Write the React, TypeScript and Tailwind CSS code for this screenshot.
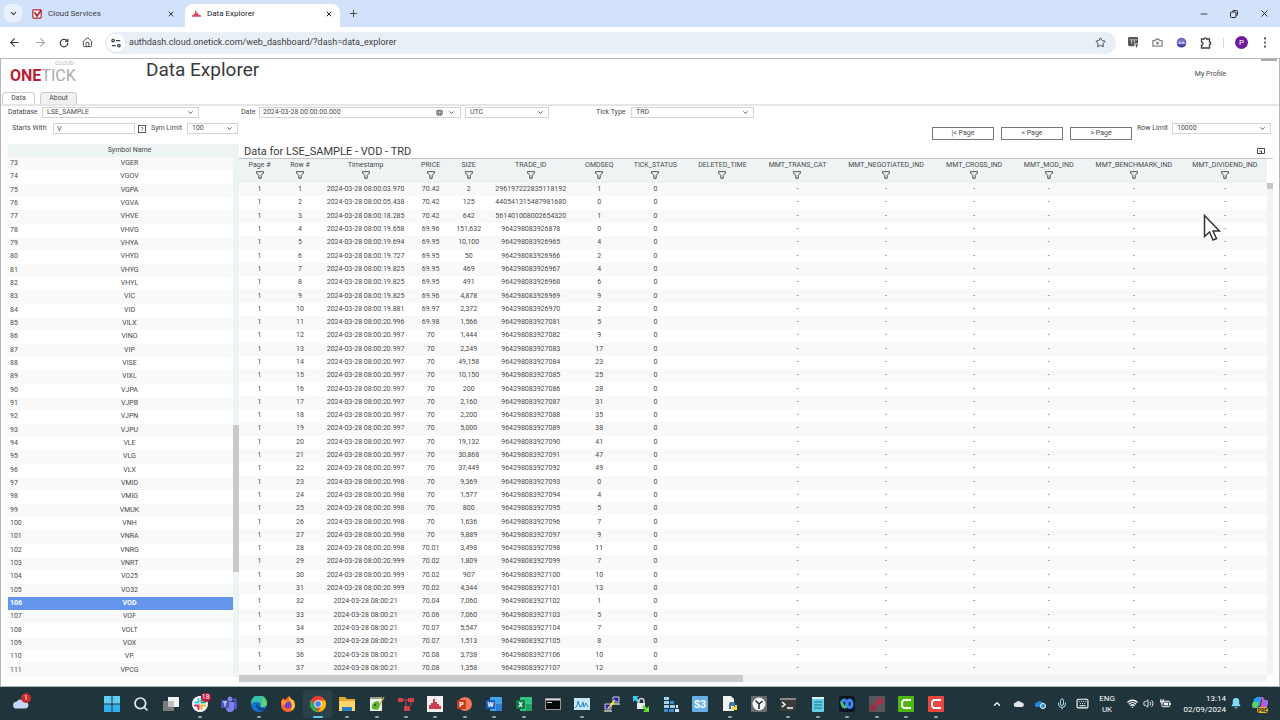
import type { ReactNode } from 'react';
import {
  ArrowLeft,
  ArrowRight,
  ChevronDown,
  ChevronUp,
  House,
  Keyboard,
  Mic,
  Minus,
  Plus,
  RotateCw,
  Search,
  Star,
  Volume2,
  Wifi,
  X,
} from 'lucide-react';

type Tick = [time: string, price: string, size: string, tradeId: string, omdseq: number];

const symbols = (
  'VGER VGOV VGPA VGVA VHVE VHVG VHYA VHYD VHYG VHYL VIC VID VILX VINO VIP VISE VIXL VJPA VJPB VJPN VJPU VLE VLG ' +
  'VLX VMID VMIG VMUK VNH VNRA VNRG VNRT VO25 VO32 VOD VOF VOLT VOX VP. VPCG'
).split(' ');
const firstSymbolRow = 73;

const ticks: Tick[] = [
  ['03.970', '70.42', '2', '296197222835118192', 1],
  ['05.438', '70.42', '125', '440541315487981680', 0],
  ['18.285', '70.42', '642', '561401008002654320', 1],
  ['19.658', '69.96', '151,632', '964298083926878', 0],
  ['19.694', '69.95', '10,100', '964298083926965', 4],
  ['19.727', '69.95', '50', '964298083926966', 2],
  ['19.825', '69.95', '469', '964298083926967', 4],
  ['19.825', '69.95', '491', '964298083926968', 6],
  ['19.825', '69.96', '4,878', '964298083926969', 9],
  ['19.881', '69.97', '2,372', '964298083926970', 2],
  ['20.996', '69.98', '1,566', '964298083927081', 5],
  ['20.997', '70', '1,444', '964298083927082', 9],
  ['20.997', '70', '2,249', '964298083927083', 17],
  ['20.997', '70', '49,158', '964298083927084', 23],
  ['20.997', '70', '10,150', '964298083927085', 25],
  ['20.997', '70', '200', '964298083927086', 28],
  ['20.997', '70', '2,160', '964298083927087', 31],
  ['20.997', '70', '2,200', '964298083927088', 35],
  ['20.997', '70', '5,000', '964298083927089', 38],
  ['20.997', '70', '19,132', '964298083927090', 41],
  ['20.997', '70', '30,868', '964298083927091', 47],
  ['20.997', '70', '37,449', '964298083927092', 49],
  ['20.998', '70', '9,369', '964298083927093', 0],
  ['20.998', '70', '1,577', '964298083927094', 4],
  ['20.998', '70', '800', '964298083927095', 5],
  ['20.998', '70', '1,636', '964298083927096', 7],
  ['20.998', '70', '9,889', '964298083927097', 9],
  ['20.998', '70.01', '3,498', '964298083927098', 11],
  ['20.999', '70.02', '1,809', '964298083927099', 7],
  ['20.999', '70.02', '907', '964298083927100', 10],
  ['20.999', '70.02', '4,344', '964298083927101', 13],
  ['21', '70.04', '7,060', '964298083927102', 1],
  ['21', '70.06', '7,060', '964298083927103', 5],
  ['21', '70.07', '5,547', '964298083927104', 7],
  ['21', '70.07', '1,513', '964298083927105', 8],
  ['21', '70.08', '3,738', '964298083927106', 10],
  ['21', '70.08', '1,358', '964298083927107', 12],
];

const columns = [
  { name: 'Page #', width: 'w-[41px]' },
  { name: 'Row #', width: 'w-[40px]' },
  { name: 'Timestamp', width: 'w-[91px]' },
  { name: 'PRICE', width: 'w-[39px]' },
  { name: 'SIZE', width: 'w-[37px]' },
  { name: 'TRADE_ID', width: 'w-[87px]' },
  { name: 'OMDSEQ', width: 'w-[50px]' },
  { name: 'TICK_STATUS', width: 'w-[62px]' },
  { name: 'DELETED_TIME', width: 'w-[72px]' },
  { name: 'MMT_TRANS_CAT', width: 'w-[78px]' },
  { name: 'MMT_NEGOTIATED_IND', width: 'w-[99px]' },
  { name: 'MMT_CROSS_IND', width: 'w-[77px]' },
  { name: 'MMT_MOD_IND', width: 'w-[72px]' },
  { name: 'MMT_BENCHMARK_IND', width: 'w-[98px]' },
  { name: 'MMT_DIVIDEND_IND', width: 'w-[84px]' },
];

type SelectProps = { id: string; value: string; className: string; label?: string };

function Select({ id, value, className, label }: SelectProps) {
  return (
    <div className={`relative h-[11px] ${className}`}>
      <select
        id={id}
        aria-label={label}
        className="block h-full w-full appearance-none border border-[#d4d4d4] bg-white pl-1 text-[7px] leading-[9px] text-[#4a4a4a]"
      >
        <option>{value}</option>
      </select>
      <ChevronDown className="pointer-events-none absolute top-[2px] right-[5px] size-[7px] text-[#444]" strokeWidth={3} />
    </div>
  );
}

function BrowserTabs() {
  return (
    <div className="flex h-[27px] shrink-0 items-end bg-[#d3e2fb] text-[8px] text-[#3c4043]">
      <button aria-label="Search tabs" className="mb-[5px] ml-1 flex size-[18px] items-center justify-center rounded-md bg-[#e9f1fe]">
        <ChevronDown className="size-[9px]" strokeWidth={3} />
      </button>
      <div className="flex h-[23px] w-[163px] items-center px-[10px] pb-[3px]">
        <svg viewBox="0 0 12 12" className="size-[10px]">
          <rect x="1" y="1" width="10" height="10" rx="1" fill="#fff" stroke="#b3202c" strokeWidth="1.4" />
          <path d="M3 4l3 4.500 5-7" fill="none" stroke="#b3202c" strokeWidth="2" />
        </svg>
        <span className="ml-[6px] flex-1">Cloud Services</span>
        <button aria-label="Close tab">
          <X className="size-2" strokeWidth={3} />
        </button>
      </div>
      <div className="flex h-[23px] w-[155px] items-center rounded-t-lg bg-white px-[7px] pb-[3px] text-[#202124]">
        <svg viewBox="0 0 12 12" className="size-[9px]" fill="#d64b5b">
          <path d="M0 9V7h2V5h2V1h2v3h2v2h2v1h2v2z" />
        </svg>
        <span className="ml-[6px] flex-1">Data Explorer</span>
        <button aria-label="Close tab">
          <X className="size-2" strokeWidth={3} />
        </button>
      </div>
      <button aria-label="New tab" className="mb-2 ml-2">
        <Plus className="size-[11px]" strokeWidth={2} />
      </button>
      <div className="mr-[10px] mb-2 ml-auto flex items-center gap-5 text-[#202124]">
        <button aria-label="Minimise">
          <Minus className="size-[10px]" />
        </button>
        <button aria-label="Restore">
          <svg viewBox="0 0 10 10" className="size-[10px]" fill="none" stroke="currentColor">
            <rect x="1.500" y="3" width="5.500" height="5.500" rx="1" />
            <path d="M3.500 3V2.500a1 1 0 0 1 1-1h3a1 1 0 0 1 1 1v3a1 1 0 0 1-1 1H7" />
          </svg>
        </button>
        <button aria-label="Close">
          <X className="size-[11px]" />
        </button>
      </div>
    </div>
  );
}

function AddressBar() {
  return (
    <div className="flex h-[31px] shrink-0 items-center bg-white text-[#3c4043]">
      <div className="ml-2 flex w-[85px] items-center justify-between">
        <button aria-label="Back">
          <ArrowLeft className="size-[13px]" strokeWidth={2} />
        </button>
        <button aria-label="Forward" className="text-[#a5a8ab]">
          <ArrowRight className="size-[13px]" strokeWidth={2} />
        </button>
        <button aria-label="Reload">
          <RotateCw className="size-[10px]" strokeWidth={3} />
        </button>
        <button aria-label="Home">
          <House className="size-[11px]" strokeWidth={2} />
        </button>
      </div>
      <div className="ml-3 flex h-[22px] flex-1 items-center rounded-full bg-[#e9eff6] pr-[10px] pl-[2px]">
        <span className="flex size-[18px] items-center justify-center rounded-full bg-white">
          <svg viewBox="0 0 12 12" className="size-[10px]" fill="none" stroke="currentColor" strokeWidth="1.500">
            <circle cx="2.500" cy="3" r="1.500" />
            <path d="M6 3h5M1 9h5" />
            <circle cx="9.500" cy="9" r="1.500" />
          </svg>
        </span>
        <input
          aria-label="Address"
          readOnly
          value="authdash.cloud.onetick.com/web_dashboard/?dash=data_explorer"
          className="ml-[4px] flex-1 bg-transparent text-[9px] text-[#3c4043] outline-none"
        />
        <Star className="size-[11px]" strokeWidth={2} />
      </div>
      <div className="mr-[13px] ml-3 flex items-center">
        <svg viewBox="0 0 12 12" className="size-[11px]">
          <rect width="11" height="10" rx="1.500" fill="#55595c" />
          <path d="M2 3h2v4M5 3h2v3M8 3h2" stroke="#d5d5d5" fill="none" />
          <path d="M7 7h5v5H7z" fill="#fff" />
          <path d="M8 8h3L9 12z" fill="#444" />
        </svg>
        <svg viewBox="0 0 12 12" className="ml-[13px] size-[11px]" fill="none" stroke="#8a8d90" strokeWidth="1.500">
          <path d="M1 4h2.500l1-1.500h3l1 1.500H11v6H1z" />
          <path d="M6 5v3.500M4.200 6.800h3.600" />
        </svg>
        <svg viewBox="0 0 12 12" className="ml-[13px] size-[11px]">
          <circle cx="6" cy="6" r="5.300" fill="#7471c4" />
          <path d="M2 8l2.500-4L6 6.500 8 4l2 4" fill="#b9b8ee" />
          <path d="M1 8h10a5.300 5.300 0 0 1-10 0z" fill="#4542a0" />
        </svg>
        <svg viewBox="0 0 12 12" className="ml-[13px] size-[12px]" fill="none" stroke="#3c4043" strokeWidth="1.300">
          <path d="M1.500 2h2.700a1.200 1.200 0 0 1 2.400 0h2.900v3a1.300 1.300 0 0 1 0 2.600V11h-8V8.200a1.500 1.500 0 0 0 0-3z" />
        </svg>
        <span className="ml-[11px] h-[10px] w-px bg-[#c9dcf5]" />
        <span className="ml-[11px] flex size-[13px] items-center justify-center rounded-full bg-[#6d1b9a] text-[8px] text-white">P</span>
        <svg viewBox="0 0 4 12" className="ml-[15px] h-[11px] w-[4px]" fill="#3c4043">
          <circle cx="2" cy="1.500" r="1.100" />
          <circle cx="2" cy="6" r="1.100" />
          <circle cx="2" cy="10.500" r="1.100" />
        </svg>
      </div>
    </div>
  );
}

function Header() {
  return (
    <header className="flex h-[33px] shrink-0">
      <div className="ml-[9px] w-[136px] pt-px">
        <span className="block w-[64px] text-right text-[6px] leading-[6px] text-[#b5b5b5]">CLOUD</span>
        <span className="block text-[16px] leading-[20px] text-[#a9a9ab]">
          <b className="text-[#b81f38]">ONE</b>TICK
        </span>
      </div>
      <h1 className="text-[19px] leading-[22px] text-[#3a3a3a]">Data Explorer</h1>
      <div className="mr-[2px] ml-auto">
        <div className="ml-auto h-[2px] w-[16px] bg-[#aaa]" />
        <a href="#profile" className="mt-[8px] mr-[51px] block leading-[11px]">
          My Profile
        </a>
      </div>
    </header>
  );
}

function Filters() {
  return (
    <form className="shrink-0 leading-[11px]">
      <div className="flex h-[12px] items-center">
        <label htmlFor="database" className="ml-[7px] w-[34px]">Database</label>
        <Select id="database" value="LSE_SAMPLE" className="w-[157px]" />
        <label htmlFor="date" className="ml-[42px] w-[18px]">Date</label>
        <div className="flex h-[11px] w-[202px] items-center border border-[#d4d4d4] pr-[5px] pl-[3px]">
          <input id="date" defaultValue="2024-03-28 00:00:00.000" className="min-w-0 flex-1 text-[7px] leading-[9px] outline-none" />
          <svg viewBox="0 0 8 8" className="size-[7px]" fill="none" stroke="#444">
            <rect x="1" y="1.500" width="6" height="5.500" rx="1" />
            <path d="M1 3h6M1 5h6M3 3v4M5 3v4" strokeWidth=".6" />
          </svg>
          <ChevronDown className="ml-[5px] size-[7px]" strokeWidth={3} />
        </div>
        <Select id="zone" label="Time zone" value="UTC" className="ml-1 w-[84px]" />
        <label htmlFor="tick-type" className="ml-[47px] w-[35px]">Tick Type</label>
        <Select id="tick-type" value="TRD" className="w-[123px]" />
      </div>
      <div className="flex h-[26px] items-start pt-[5px]">
        <label htmlFor="starts-with" className="ml-[11px] w-[41px]">Starts With</label>
        <input
          id="starts-with"
          defaultValue="V"
          className="h-[11px] w-[82px] border border-[#d4d4d4] pl-[3px] text-[7px] leading-[9px] outline-none"
        />
        <button type="button" aria-label="Help" className="mt-[2px] ml-[3px] flex size-[8px] items-center justify-center border border-[#555] text-[6px] leading-[6px]">
          ?
        </button>
        <label htmlFor="sym-limit" className="ml-[5px] w-[36px]">Sym Limit</label>
        <Select id="sym-limit" value="100" className="w-[51px]" />
        <div className="mt-[4px] ml-auto flex gap-[7px]">
          {['|< Page', '< Page', '> Page'].map((text) => (
            <button key={text} type="button" className="h-[13px] w-[62px] border border-[#777] leading-[11px]">
              {text}
            </button>
          ))}
        </div>
        <label htmlFor="row-limit" className="ml-[5px] w-[35px]">Row Limit</label>
        <Select id="row-limit" value="10000" className="mr-[8px] w-[99px]" />
      </div>
    </form>
  );
}

function SymbolList() {
  return (
    <section className="mb-[5px] ml-[7px] flex w-[231px] shrink-0">
      <table className="h-full w-[225px] table-fixed border-collapse text-center">
        <thead>
          <tr className="h-[13px] bg-[#eef3f4]">
            <th className="w-[18px] p-0" />
            <th className="p-0 font-normal">Symbol Name</th>
            <th className="w-0 p-0" />
          </tr>
        </thead>
        <tbody>
          {symbols.map((symbol, i) => (
            <tr key={symbol} className={symbol === 'VOD' ? 'bg-[#6495ed] font-bold text-white' : 'odd:bg-[#f9f9f9]'}>
              <td className="p-0 pl-[2px] text-left">{firstSymbolRow + i}</td>
              <td className="p-0">{symbol}</td>
              <td className="p-0" />
            </tr>
          ))}
        </tbody>
      </table>
      <div className="flex w-[6px] flex-col bg-[#eef3f4] pt-[281px]">
        <div className="h-[147px] bg-[#c6cacc]" />
      </div>
    </section>
  );
}

function FunnelIcon() {
  return (
    <svg viewBox="0 0 12 12" className="mx-auto size-[8px]" fill="none" stroke="#444" strokeWidth="1.400">
      <path d="M.8 1h10.400v2L7.800 6.500V11H4.200V6.500L.8 3z" />
    </svg>
  );
}

function TickData() {
  return (
    <section className="relative flex min-w-0 flex-1 flex-col">
      <div className="mr-[6px] flex h-[15px] items-center justify-between border-b border-[#c4c8c9] pl-[5px]">
        <h2 className="text-[11px] leading-[13px] text-[#3a3a3a]">Data for LSE_SAMPLE - VOD - TRD</h2>
        <button aria-label="Export" className="mr-[8px]">
          <svg viewBox="0 0 8 6" className="h-[6px] w-[8px]" fill="none" stroke="#333">
            <path d="M.5.5h7v5h-7zM2.500 3h2v2" strokeWidth=".9" />
          </svg>
        </button>
      </div>
      <div className="mr-[6px] flex min-h-0 flex-1">
        <table className="h-full min-w-0 flex-1 table-fixed border-collapse text-center">
          <thead>
            <tr className="h-[24px] bg-[#eef3f4]">
              {columns.map((column) => (
                <th key={column.name} className={`p-0 align-top leading-[12px] font-normal whitespace-nowrap ${column.width}`}>
                  {column.name}
                  <FunnelIcon />
                </th>
              ))}
            </tr>
          </thead>
          <tbody>
            {ticks.map(([time, price, size, tradeId, omdseq], i) => (
              <tr key={tradeId} className="odd:bg-[#f9f9f9]">
                <td className="p-0">1</td>
                <td className="p-0">{i + 1}</td>
                <td className="p-0">2024-03-28 08:00:{time}</td>
                <td className="p-0">{price}</td>
                <td className="p-0">{size}</td>
                <td className="p-0">{tradeId}</td>
                <td className="p-0">{omdseq}</td>
                <td className="p-0">0</td>
                <td className="p-0" />
                {columns.slice(9).map((column) => (
                  <td key={column.name} className="p-0">-</td>
                ))}
              </tr>
            ))}
          </tbody>
        </table>
        <div className="mt-[24px] w-[6px] bg-[#f2f3f4]">
          <div className="h-[6px] bg-[#c6c6c6]" />
        </div>
      </div>
      <div className="mr-[12px] h-[7px] bg-[#f2f3f4]">
        <div className="h-full w-[49%] bg-[#c9cbcc]" />
      </div>
      <svg viewBox="0 0 18 28" className="absolute top-[70px] right-[58px] h-[28px] w-[18px]" fill="#fff" stroke="#333" strokeWidth="1.500">
        <path d="M1.500 1.500v21l5-4.500 3.500 8 3.500-1.500-3.500-7.500h6.500z" />
      </svg>
    </section>
  );
}

function Office({ letter, color, light, round }: { letter: string; color: string; light: string; round?: boolean }) {
  return (
    <svg viewBox="0 0 16 16">
      <rect x={round ? 1 : 4} y="1" width={round ? 14 : 12} height="14" rx={round ? 7 : 1} fill={light} />
      {!round && <path d="M10 8h6v5a2 2 0 0 1-2 2h-4z" fill={color} opacity=".5" />}
      <rect x="0" y="4" width="9" height="9" rx="1" fill={color} />
      <text x="4.500" y="11" textAnchor="middle" fontSize="7" fontWeight="700" fill="#fff">
        {letter}
      </text>
    </svg>
  );
}

function Camtasia({ color }: { color: string }) {
  return (
    <svg viewBox="0 0 16 16">
      <rect width="16" height="16" rx="1" fill={color} />
      <path d="M13 4H6L4 6v4l2 2h7" fill="none" stroke="#fff" strokeWidth="2" />
    </svg>
  );
}

const apps: { name: string; running?: boolean; active?: boolean; icon: ReactNode }[] = [
  {
    name: 'Start',
    icon: (
      <svg viewBox="0 0 16 16" fill="#62cdf5">
        <path d="M0 0h7.500v7.500H0zM8.500 0H16v7.500H8.500z" />
        <path d="M0 8.500h7.500V16H0zM8.500 8.500H16V16H8.500z" fill="#36b0ec" />
      </svg>
    ),
  },
  { name: 'Search', icon: <Search className="text-[#e8eef0]" strokeWidth={2.5} /> },
  {
    name: 'Task view',
    icon: (
      <svg viewBox="0 0 16 16">
        <path d="M5 1h11v10H5z" fill="#f4f4f4" />
        <path d="M0 5h11v10H0z" fill="#777c7d" />
        <path d="M5 5h6v6H5z" fill="#bfc2c2" />
      </svg>
    ),
  },
  {
    name: 'Slack',
    running: true,
    icon: (
      <svg viewBox="0 0 16 16" strokeWidth="2" strokeLinecap="round" fill="none">
        <circle cx="8" cy="8" r="8" fill="#fff" />
        <path d="M6.500 3v3.500H3" stroke="#36c5f0" />
        <path d="M9.500 3v3.500H13" stroke="#2eb67d" />
        <path d="M9.500 13V9.500H13" stroke="#ecb22e" />
        <path d="M6.500 13V9.500H3" stroke="#e01e5a" />
      </svg>
    ),
  },
  {
    name: 'Teams',
    icon: (
      <svg viewBox="0 0 16 16">
        <circle cx="9" cy="3" r="2.500" fill="#7b83eb" />
        <circle cx="14" cy="4" r="1.700" fill="#5059c9" />
        <path d="M5 6h8v6a4 4 0 0 1-8 0z" fill="#7b83eb" />
        <path d="M13 6h3v5a2 2 0 0 1-3 2z" fill="#5059c9" />
        <rect x="0" y="4" width="8" height="8" rx="1" fill="#4b53bc" />
        <path d="M2 6h4M4 6v4.500" stroke="#fff" />
      </svg>
    ),
  },
  {
    name: 'Edge',
    running: true,
    icon: (
      <svg viewBox="0 0 16 16">
        <circle cx="8" cy="8" r="8" fill="#1673c8" />
        <path d="M0 7a8 8 0 0 1 16 0c0 3-2 4-5 4-2 0-1-1-1-2 0-2-2-3-4-3S1 6 0 9z" fill="#35c1b0" />
        <path d="M9 1a8 8 0 0 1 7 6c0 3-2 4-5 4-2 0-1-1-1-2 2-3 2-6-1-8z" fill="#63d56c" />
        <path d="M6 7c-2 3 0 7 4 8 2-.5 4-1.500 5-3-4 1-8-1-9-5z" fill="#0c4597" />
      </svg>
    ),
  },
  {
    name: 'Firefox',
    icon: (
      <svg viewBox="0 0 16 16">
        <path d="M1 5l2-3 2 2 4-4 1 2 4 3 1 4a7 7 0 1 1-14 0z" fill="#ff6a2b" />
        <path d="M9 0l1 2 4 3 1 4c0 3-2 5-4 6 2-5 0-9-2-11z" fill="#ffc53a" />
        <circle cx="8" cy="9" r="3.500" fill="#7b3fc4" />
        <path d="M2 5c2-1 4-1 6 1-2 0-3 1-3 3-2 0-3-2-3-4z" fill="#ff9a2e" />
      </svg>
    ),
  },
  {
    name: 'Chrome',
    active: true,
    icon: (
      <svg viewBox="0 0 16 16">
        <circle cx="8" cy="8" r="8" fill="#ea4335" />
        <path d="M1 4l4.500 6L8 16A8 8 0 0 1 1 4z" fill="#34a853" />
        <path d="M8 4.500h7.200A8 8 0 0 1 8 16l3.500-6z" fill="#fbbc05" />
        <circle cx="8" cy="8" r="3.800" fill="#fff" />
        <circle cx="8" cy="8" r="2.900" fill="#4285f4" />
      </svg>
    ),
  },
  {
    name: 'Explorer',
    running: true,
    icon: (
      <svg viewBox="0 0 16 16">
        <path d="M0 1h6l2 2h8v12H0z" fill="#e6a930" />
        <path d="M0 5h16v10H0z" fill="#ffd56b" />
        <path d="M3 11h10v4H3z" fill="#2a7cc7" />
      </svg>
    ),
  },
  {
    name: 'Notepad++',
    running: true,
    icon: (
      <svg viewBox="0 0 16 16">
        <path d="M1 1h12v14H1z" fill="#eef2e4" />
        <path d="M1 1h12v2H1z" fill="#9b9b8a" />
        <path d="M3 13c-1-5 2-8 6-8 3 2 2 7-1 9z" fill="#59b52f" />
        <path d="M15 1l-5 9" stroke="#c7a347" strokeWidth="1.500" />
        <circle cx="6" cy="9" r="1" fill="#184f12" />
      </svg>
    ),
  },
  {
    name: 'Diagrams',
    running: true,
    icon: (
      <svg viewBox="0 0 16 16" fill="#d63f4a">
        <path d="M0 2h5v4H0zM10 2h6v4h-6zM6 10h6v5H6z" />
        <path d="M5 4h5M8 4v7M13 6v4" stroke="#d63f4a" fill="none" />
      </svg>
    ),
  },
  {
    name: 'OneTick',
    running: true,
    icon: (
      <svg viewBox="0 0 16 16">
        <rect width="16" height="16" fill="#f5eeee" />
        <path d="M2 13V9h2V7h2V3h2v3h2v2h2v2h2v3z" fill="#d03b4d" />
      </svg>
    ),
  },
  { name: 'PowerPoint', running: true, icon: <Office letter="P" color="#c43e1c" light="#f0775a" round /> },
  { name: 'Word', running: true, icon: <Office letter="W" color="#185abd" light="#41a5ee" /> },
  { name: 'Excel', running: true, icon: <Office letter="X" color="#107c41" light="#33c481" /> },
  {
    name: 'Command prompt',
    icon: (
      <svg viewBox="0 0 16 16">
        <path d="M.5 2.500h15v11H.5z" fill="#080808" stroke="#999" />
        <path d="M1 3h14v1.500H1z" fill="#ddd" />
        <path d="M2 6.500h5" stroke="#ddd" />
      </svg>
    ),
  },
  {
    name: 'Performance monitor',
    running: true,
    icon: (
      <svg viewBox="0 0 16 16">
        <path d="M0 2h16v12H0z" fill="#c8e8f8" />
        <path d="M1 12l2-2 1-5 2 6 2-1 1-4 1 5 2-4 2 4" fill="none" stroke="#2d86bd" />
      </svg>
    ),
  },
  {
    name: 'PuTTY',
    icon: (
      <svg viewBox="0 0 16 16">
        <path d="M9 1h6v5H9zM1 8h6v5H1z" fill="#2424b8" stroke="#ccc" />
        <path d="M8 8h8M0 15h8" stroke="#ccc" strokeWidth="1.500" />
        <path d="M11 4L7 8h2l-5 4" fill="none" stroke="#ffe633" strokeWidth="1.300" />
      </svg>
    ),
  },
  {
    name: 'WinSCP',
    icon: (
      <svg viewBox="0 0 16 16">
        <path d="M0 0h6L4 2l3 3-2 2-3-3-2 2z" fill="#42c8ee" />
        <path d="M6 7V5a2 2 0 0 1 5 0v2" fill="none" stroke="#ccc" strokeWidth="1.500" />
        <path d="M4 7h8v6H4z" fill="#ececec" />
        <path d="M16 16h-6l2-2-3-3 2-2 3 3 2-2z" fill="#63dc3b" />
      </svg>
    ),
  },
  {
    name: 'Data grid',
    icon: (
      <svg viewBox="0 0 16 16">
        <path d="M1 1h5v3H1zM1 5h5v3H1zM1 9h5v3H1zM7 9h5v3H7z" fill="#9fd3f5" />
        <path d="M7 5h4v3H7zM1 13h4v3H1zM6 13h5v3H6z" fill="#3b8dd0" />
        <path d="M12 13h4v3h-4zM13 9h2v3h-2z" fill="#d5ecfa" />
      </svg>
    ),
  },
  {
    name: 'S3 browser',
    icon: (
      <svg viewBox="0 0 16 16">
        <rect width="16" height="16" rx="1" fill="#6aaee6" />
        <text x="8" y="11.500" textAnchor="middle" fontSize="10" fontWeight="700" fill="#fff">
          S3
        </text>
      </svg>
    ),
  },
  {
    name: 'Python',
    running: true,
    icon: (
      <svg viewBox="0 0 16 16">
        <path d="M1 0h8l3 3v12H1z" fill="#f1f1ee" />
        <path d="M8 6h5v4H9v3H7V8z" fill="#3c78aa" />
        <path d="M11 14h4V9h-2v2h-3v4z" fill="#ffd847" />
      </svg>
    ),
  },
  {
    name: 'Clock',
    icon: (
      <svg viewBox="0 0 16 16">
        <rect width="16" height="16" rx="1" fill="#686c6e" />
        <circle cx="8" cy="8" r="6.500" fill="#f4f4f4" />
        <path d="M4.500 4.500L8 8l3.500-3M8 8v5" fill="none" stroke="#222" strokeWidth="1.500" />
      </svg>
    ),
  },
  {
    name: 'Terminal',
    running: true,
    icon: (
      <svg viewBox="0 0 16 16">
        <rect y="2" width="16" height="13" rx="1" fill="#3b3b3b" />
        <path d="M0 2h16v2H0z" fill="#888" />
        <path d="M2 6l3 2.500L2 11M7 12h6" fill="none" stroke="#fff" strokeWidth="1.500" />
      </svg>
    ),
  },
  {
    name: 'Notepad',
    running: true,
    icon: (
      <svg viewBox="0 0 16 16">
        <rect x="2" y="1" width="12" height="15" rx="1" fill="#62cfe6" />
        <path d="M2 1h12v2H2z" fill="#d9f5fa" />
        <path d="M4 6h8M4 9h8M4 12h8" stroke="#176d86" />
      </svg>
    ),
  },
  {
    name: 'Webex',
    running: true,
    icon: (
      <svg viewBox="0 0 16 16" fill="none" strokeWidth="3">
        <rect width="16" height="16" rx="3" fill="#0c1524" />
        <path d="M2.500 5c1 7 4 8 5.500 3" stroke="#3fc27f" />
        <path d="M8 8c2-7 5-3 5 0 0 4-4 5-5 0C7 3 4 3 3 6" stroke="#3f86f4" />
      </svg>
    ),
  },
  {
    name: 'Remote desktop',
    running: true,
    icon: (
      <svg viewBox="0 0 16 16">
        <rect width="16" height="16" fill="#58565a" />
        <path d="M4 12l8-9" stroke="#b32c42" strokeWidth="3" />
        <circle cx="4" cy="12" r="3" fill="#a02b3e" />
        <circle cx="11" cy="5" r="3" fill="#b32c42" />
      </svg>
    ),
  },
  { name: 'Camtasia', running: true, icon: <Camtasia color="#4fb80f" /> },
  { name: 'Camtasia recorder', running: true, icon: <Camtasia color="#e8483f" /> },
];

function Cloud({ fill }: { fill: string }) {
  return (
    <svg viewBox="0 0 16 10" className="h-full w-full" fill={fill}>
      <path d="M4 9a3 3 0 0 1 0-6 4 4 0 0 1 7 0 3 3 0 0 1 1 6z" />
    </svg>
  );
}

function Taskbar() {
  return (
    <footer className="flex h-[33px] shrink-0 items-center bg-[#20343b] text-white">
      <div className="relative ml-[12px] h-[12px] w-[18px]">
        <Cloud fill="#c3d6f4" />
        <span className="absolute -top-[5px] left-[9px] flex size-[10px] items-center justify-center rounded-full bg-[#c92a2a] text-[7px] leading-[10px]">
          1
        </span>
      </div>
      <div className="ml-[67px] flex w-2/3">
        {apps.map((app) => (
          <button
            key={app.name}
            aria-label={app.name}
            className={`relative flex h-[28px] flex-1 items-center justify-center rounded ${app.active ? 'bg-[#2c4047]' : ''}`}
          >
            <span className="size-[16px] [&>svg]:size-full">{app.icon}</span>
            {app.running && <span className="absolute bottom-0 h-[2px] w-[4px] rounded-full bg-[#9aa5a9]" />}
            {app.active && <span className="absolute bottom-0 h-[2px] w-[10px] rounded-full bg-[#62c5ee]" />}
            {app.name === 'Slack' && (
              <span className="absolute top-[3px] right-[4px] flex h-[9px] w-[10px] items-center justify-center rounded-full bg-[#c41845] text-[7px] leading-[9px]">
                18
              </span>
            )}
          </button>
        ))}
      </div>
      <div className="mr-[12px] ml-auto flex items-center">
        <ChevronUp className="size-[10px]" strokeWidth={3} />
        <span className="ml-[11px] h-[8px] w-[12px]">
          <Cloud fill="#e4e7e9" />
        </span>
        <span className="relative ml-[9px] h-[8px] w-[12px]">
          <Cloud fill="#2587d8" />
          <span className="absolute right-0 -bottom-px size-[6px] rounded-full border border-white bg-[#2587d8]" />
        </span>
        <Mic className="ml-[10px] size-[12px] text-[#a9dcea]" />
        <Keyboard className="ml-[8px] size-[13px]" />
        <div className="ml-[9px] w-[18px] text-center text-[8px] leading-[11px]">
          ENG
          <br />
          UK
        </div>
        <Wifi className="ml-[11px] size-[11px]" strokeWidth={3} />
        <Volume2 className="ml-[5px] size-[11px]" />
        <svg viewBox="0 0 12 12" className="ml-[6px] size-[11px]" fill="none" stroke="#fff">
          <rect x="2" y="3.500" width="8.500" height="6" rx="1" />
          <path d="M4 5h5v3H4z" fill="#fff" stroke="none" />
          <path d="M11.500 5.500v2M1 1v3M3.500 1v3M0 3.500h4.500L2 6z" />
        </svg>
        <div className="ml-[12px] w-[43px] text-right text-[8px] leading-[11px]">
          13:14
          <br />
          02/09/2024
        </div>
        <svg viewBox="0 0 10 12" className="ml-[5px] h-[11px] w-[10px]" fill="#7fdcf5">
          <path d="M5 0a3.500 3.500 0 0 0-3.500 3.500V6L0 9h10L8.500 6V3.500A3.500 3.500 0 0 0 5 0zM3.500 10h3a1.500 1.500 0 0 1-3 0z" />
        </svg>
        <div className="relative ml-[11px]">
          <svg viewBox="0 0 16 16" className="size-[16px]">
            <path d="M5 1h5L8 9 5 12H2a2 2 0 0 1-2-3l2-6z" fill="#2a9cf0" />
            <path d="M0 9l2 3h3l2-6H1z" fill="#5ed15d" />
            <path d="M9 1h2l2 3h1a2 2 0 0 1 2 3l-2 6-3 2H7l3-10z" fill="#d44fc0" />
            <path d="M13 4h1a2 2 0 0 1 2 3l-1 4-4 1z" fill="#9b6af2" />
          </svg>
          <span className="absolute right-0 -bottom-px rounded-sm bg-[#f2b829] px-[1px] text-[5px] leading-[6px] font-bold text-[#222]">
            PRE
          </span>
        </div>
      </div>
    </footer>
  );
}

export default function App() {
  return (
    <div className="flex h-screen flex-col overflow-hidden bg-white font-['Roboto',sans-serif]">
      <BrowserTabs />
      <AddressBar />
      <main className="flex min-h-0 flex-1 flex-col border border-[#b4b6b8] pb-[4px] text-[7px] leading-[9px] text-[#4a4a4a]">
        <Header />
        <nav className="flex h-[14px] shrink-0 items-end border-b-2 border-[#e6e6e6] leading-[11px]">
          <a href="#data" className="ml-px flex h-[12px] w-[33px] items-center justify-center rounded-t-sm border border-b-0 border-[#ccc]">
            Data
          </a>
          <a
            href="#about"
            className="ml-[5px] flex h-[12px] w-[37px] items-center justify-center rounded-t-sm border border-b-0 border-[#ccc] bg-[#f0f0f0]"
          >
            About
          </a>
        </nav>
        <Filters />
        <div className="flex min-h-0 flex-1">
          <SymbolList />
          <TickData />
        </div>
      </main>
      <Taskbar />
    </div>
  );
}
